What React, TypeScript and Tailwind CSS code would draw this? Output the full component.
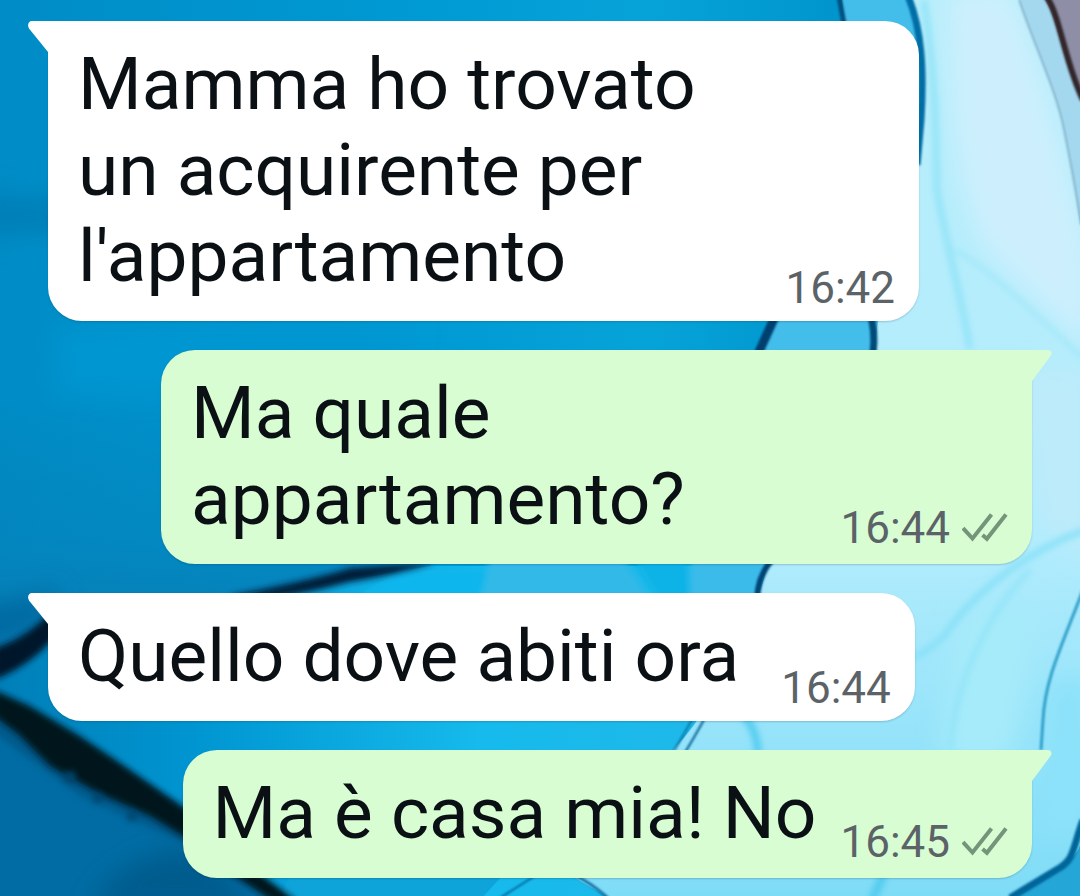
import clsx from "clsx";

type Message = {
  text: string;
  time: string;
  mine: boolean;
};

const messages: Message[] = [
  { text: "Mamma ho trovato un acquirente per l'appartamento", time: "16:42", mine: false },
  { text: "Ma quale appartamento?", time: "16:44", mine: true },
  { text: "Quello dove abiti ora", time: "16:44", mine: false },
  { text: "Ma è casa mia! No", time: "16:45", mine: true },
];

const DoubleCheck = () => (
  <svg viewBox="0 0 46 30" className="h-[30px] w-[46px] shrink-0" fill="none" stroke="#75957b" strokeWidth="4" aria-hidden="true">
    <path d="M1 15 L10.5 25.500 L29.500 1.500" />
    <path d="M20.5 22 L24.9 25.800 L44 1.500" />
  </svg>
);

const Tail = ({ mine }: { mine: boolean }) => (
  <svg
    viewBox="0 0 21 32"
    className={clsx("absolute top-0 h-8 w-[21px]", mine ? "-right-5 text-[#d8fdd2]" : "-left-5 text-white")}
    aria-hidden="true"
  >
    {mine ? (
      <path fill="currentColor" d="M0 0 H17 C20.500 0 21.500 3.500 19.500 6 L1 31 H0 Z" />
    ) : (
      <path fill="currentColor" d="M21 0 H4 C.5 0 -1 4 1 7.500 L20 31 H21 Z" />
    )}
  </svg>
);

const Bubble = ({ text, time, mine }: Message) => (
  <li className={clsx("flex", mine ? "justify-end" : "justify-start")}>
    <div
      className={clsx(
        "relative flex max-w-[871px] items-end rounded-[34px] pl-[30px] shadow-[0_1px_2px_rgba(0,40,60,0.2)]",
        mine ? "gap-6 rounded-tr-none bg-[#d8fdd2] pr-6" : "gap-[42px] rounded-tl-none bg-white pr-6"
      )}
    >
      <Tail mine={mine} />
      <p className="flex-1 pt-5 pb-[22px] text-[73px] leading-[86px] text-[#0a1014]">{text}</p>
      <div className={clsx("flex shrink-0 items-center gap-3", mine ? "pb-2.5" : "pb-[7px]")}>
        <time className="text-[44px] leading-[52px] text-[#5b6368]">{time}</time>
        {mine && <DoubleCheck />}
      </div>
    </div>
  </li>
);

// Alcohol ink style wallpaper
const Wallpaper = () => (
  <svg
    viewBox="0 0 1080 896"
    preserveAspectRatio="xMidYMid slice"
    className="absolute inset-0 -z-10 h-full w-full"
    aria-hidden="true"
  >
    <defs>
      <linearGradient id="sea" x1="0" y1="0" x2="1" y2="0">
        <stop offset="0" stopColor="#008cc6" />
        <stop offset=".4" stopColor="#009ad4" />
        <stop offset=".6" stopColor="#06a3d8" />
        <stop offset=".77" stopColor="#0096cd" />
      </linearGradient>
      <linearGradient id="ice" x1="0" y1="0" x2="0" y2="1">
        <stop offset="0" stopColor="#b8eefb" />
        <stop offset=".6" stopColor="#b2ecfd" />
        <stop offset="1" stopColor="#7fdcf7" />
      </linearGradient>
      <linearGradient id="shade" x1="0" y1="0" x2="0" y2="1">
        <stop offset="0" stopColor="#0778ae" stopOpacity="0" />
        <stop offset=".5" stopColor="#0680b8" stopOpacity=".5" />
        <stop offset="1" stopColor="#0778ae" />
      </linearGradient>
      <linearGradient id="pool" x1="0" y1="0" x2="1" y2="0">
        <stop offset="0" stopColor="#007fb8" />
        <stop offset=".25" stopColor="#0096d2" />
        <stop offset=".6" stopColor="#16baec" />
        <stop offset="1" stopColor="#22b8e8" />
      </linearGradient>
      <filter id="soft1" x="-20%" y="-20%" width="140%" height="140%">
        <feGaussianBlur stdDeviation="1" />
      </filter>
      <filter id="soft3" x="-20%" y="-20%" width="140%" height="140%">
        <feGaussianBlur stdDeviation="3" />
      </filter>
      <filter id="soft12" x="-40%" y="-40%" width="180%" height="180%">
        <feGaussianBlur stdDeviation="12" />
      </filter>
    </defs>
    <rect width="1080" height="896" fill="url(#sea)" />
    <path d="M0 400 H480 L430 566 Q240 590 0 670 Z" fill="url(#shade)" />
    <g filter="url(#soft12)">
      <path d="M-20 190 Q40 205 70 190 L70 235 Q20 230 -20 240 Z" fill="#007fb8" />
      <path d="M60 330 Q260 310 420 335 L300 380 Q160 400 60 390 Z" fill="#0396d1" />
      <path d="M-30 610 Q20 600 60 590 L40 630 L-30 650 Z" fill="#0069a0" />
    </g>

    {/* cyan pool under the first fold */}
    <path d="M0 668 Q60 615 250 592 Q360 580 430 566 H800 L690 750 L605 896 H280 L180 830 L0 705 Z" fill="url(#pool)" />
    <path d="M400 570 H490 L480 600 H350 Z" fill="#0cb6ec" filter="url(#soft3)" />
    <path d="M490 556 H622 L650 600 H480 Z" fill="#33b9e8" filter="url(#soft3)" />
    <path d="M632 556 L686 556 L690 600 H660 Z" fill="#0eb2e6" filter="url(#soft3)" />
    <path d="M690 556 H775 L755 604 H690 Z" fill="#3abbe9" filter="url(#soft3)" />
    <path d="M290 874 H504 L480 900 H280 Z" fill="#0ea4da" />

    {/* pale right side */}
    <path d="M842 0 C850 60 845 180 800 270 L762 350 H880 L930 180 V0 Z" fill="#43bdea" />
    <path
      d="M912 0 C928 60 924 130 915 200 C900 270 875 300 876 349 C850 430 800 520 768 566 C760 590 748 640 700 716 C680 750 590 830 575 878 L606 896 H1080 V0 Z"
      fill="url(#ice)"
    />
    <g filter="url(#soft12)">
      <path d="M950 -10 H1010 C1040 60 1070 180 1090 260 V350 L985 250 C950 180 950 80 950 -10 Z" fill="#cdeffd" />
      <path d="M1020 370 H1090 V560 L1040 520 Z" fill="#bdebfa" />
      <path d="M960 620 Q1000 590 1040 610 L1010 760 H940 Z" fill="#a6ebfa" />
      <path d="M1050 680 H1090 V830 H1040 Z" fill="#8be2fa" />
    </g>
    <g fill="none" filter="url(#soft3)">
      <path d="M924 0 C936 80 936 140 937 190 C945 240 960 290 970 349" stroke="#8fe3f8" strokeWidth="6" />
      <path d="M955 250 C990 270 1020 300 1085 360" stroke="#98e5f8" strokeWidth="3" />
      <path d="M1085 530 C1030 550 975 590 945 635 Q925 655 905 660" stroke="#86e0f7" strokeWidth="6" />
      <path d="M1030 570 C990 610 955 680 950 750" stroke="#92e4f8" strokeWidth="5" />
      <path d="M744 716 Q757 730 758 754" stroke="#4fcaee" strokeWidth="7" />
      <path d="M884 874 L872 900" stroke="#4fcbee" strokeWidth="8" />
    </g>

    {/* top right corner */}
    <path d="M1019 0 C1036 50 1056 90 1064 130 C1070 160 1076 190 1080 225 V0 Z" fill="#a3d8ef" />
    <path d="M1045 0 C1058 20 1062 60 1080 95 V0 Z" fill="#8e8fa6" />
    <g fill="none" filter="url(#soft1)">
      <path d="M1019 0 C1036 50 1056 90 1064 130 C1070 160 1076 190 1081 225" stroke="#7fabc3" strokeWidth="1.500" />
      <path d="M1046 -4 C1060 15 1064 60 1083 100" stroke="#33262c" strokeWidth="6" />
      <path d="M839 -3 L844 24" stroke="#00507f" strokeWidth="5" />
      <path d="M908 -4 C922 30 924 70 921 120 L917 165" stroke="#006ea6" strokeWidth="7" />
      <path d="M778 310 Q768 332 758 354" stroke="#00406f" strokeWidth="9" />
      <path d="M869 310 Q876 330 873 354" stroke="#004c78" strokeWidth="7" />
      <path d="M776 556 Q758 572 757 600" stroke="#004474" strokeWidth="6" />
    </g>

    {/* lower right veins */}
    <path d="M1080 845 Q1076 860 1050 872 L1010 896 H1080 Z" fill="#24a6d6" />
    <g fill="none" filter="url(#soft1)">
      <path d="M1083 590 C1060 650 1045 680 1043 720 L1041 750" stroke="#2f9fc9" strokeWidth="3" />
      <path d="M1083 820 C1072 850 1075 860 1056 870 L1010 898" stroke="#00669a" strokeWidth="7" />
      <path d="M694 716 Q682 738 672 754" stroke="#0a74a8" strokeWidth="2" />
      <path d="M706 716 Q694 738 684 754" stroke="#075f92" strokeWidth="2" />
      <path d="M572 874 Q590 882 608 898" stroke="#0a6c9e" strokeWidth="3" />
      <path d="M538 874 Q522 884 500 898" stroke="#07699e" strokeWidth="2" />
    </g>

    {/* dark ink on the left */}
    <path d="M0 705 L90 765 L182 822 L285 896 H0 Z" fill="#006ca3" />
    <path d="M90 910 Q120 850 200 850 L260 910 Z" fill="#005c8d" filter="url(#soft12)" />
    <path d="M-10 700 L90 748 L190 812 V846 L80 796 L-10 730 Z" fill="#00507c" opacity=".6" filter="url(#soft3)" />
    <g filter="url(#soft3)">
      <path d="M-6 648 Q28 638 54 608 L56 636 Q30 666 -6 680 Z" fill="#00192b" />
      <path d="M230 596 Q320 578 350 568 L436 562 Q400 574 350 582 Q290 598 240 602 Z" fill="#001f38" />
      <path
        d="M-6 690 L30 706 L80 736 L120 763 L190 812 L255 870 L298 902 H274 L225 870 L186 838 L150 816 L100 794 L50 766 L18 734 L-6 716 Z"
        fill="#00131f"
      />
    </g>
    <g fill="#00456c" filter="url(#soft3)">
      <circle cx="70" cy="777" r="6" />
      <circle cx="98" cy="798" r="5" />
      <circle cx="132" cy="816" r="5" />
    </g>
  </svg>
);

const App = () => {
  return (
    <main className="relative isolate min-h-screen overflow-hidden px-12 pt-[21px] pb-[18px] font-['Roboto',sans-serif]">
      <Wallpaper />
      <ul className="flex flex-col gap-[29px]">
        {messages.map((message) => (
          <Bubble key={message.text} {...message} />
        ))}
      </ul>
    </main>
  );
};

export default App;
